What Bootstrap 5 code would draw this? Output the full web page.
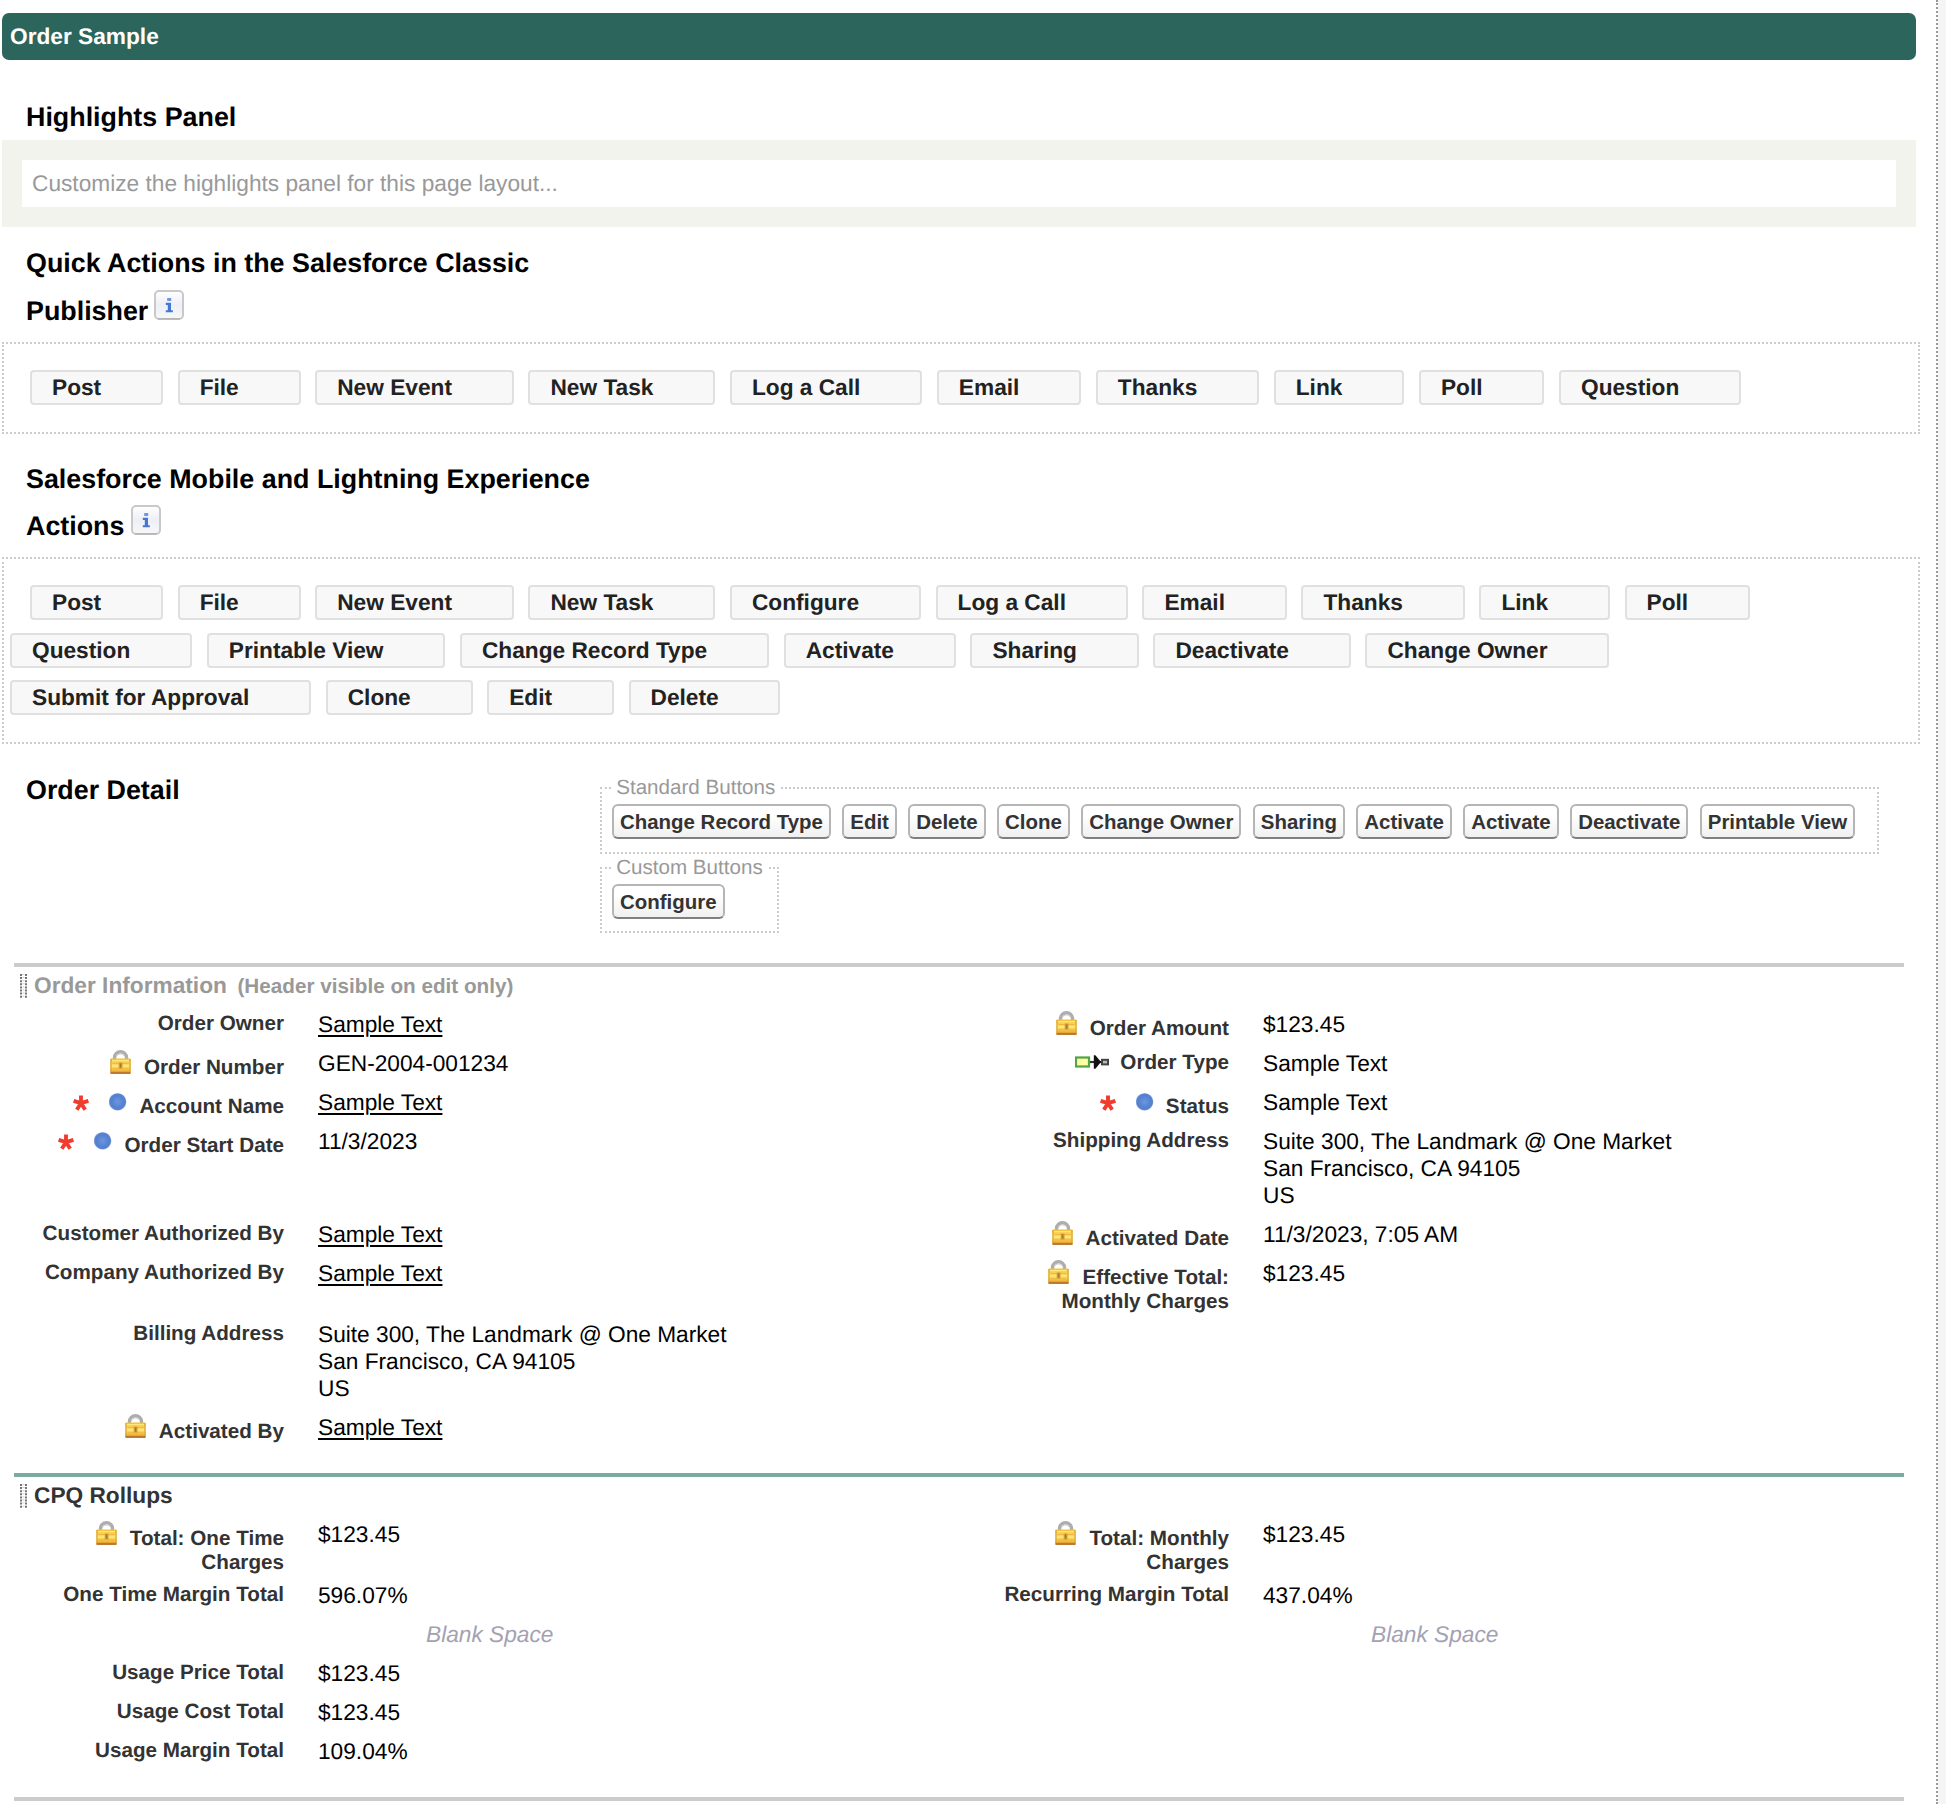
<!DOCTYPE html>
<html lang="en">
<head>
<meta charset="utf-8">
<title>Order Sample</title>
<link href="https://cdn.jsdelivr.net/npm/bootstrap@5.3.0/dist/css/bootstrap.min.css" rel="stylesheet">
<style>
body{background:#f5f5f5;font-family:"Liberation Sans",Arial,sans-serif;font-size:22.7px;line-height:27px;color:#000;text-rendering:geometricPrecision}
.layout-page{width:1938px;height:1804px;background:#fff;border-right:2px dotted #999;padding:13px 16px 0 2px}
.title-bar{width:1914px;height:47px;border-radius:7px;background:#2c655b;padding-left:8px}
.area-title{font-size:26.85px;line-height:47.5px;font-weight:700;padding-left:24px;margin:0}
.hl-panel{width:1914px;height:87px;background:#f2f3ec;padding:20px}
.hl-inner{height:47px;color:#999;padding:0 0 1px 10px}
.drop-area{width:1918px;border:2px dotted #ccc;padding:26px 6px 0;row-gap:12.5px}
.chip-row{gap:14.7px}
.chip-row.first{padding-left:20px}
.chip{height:35px;line-height:31px;border:2px solid #e0e0e0;border-radius:4px;background:#f8f8f8;color:#222;font-weight:700;padding:0 59.8px 0 20px;white-space:nowrap}
.btn-group-box{border:2px dotted #ccc;padding:4px 9.5px 0 10px;height:78px;margin:0}
.btn-group-box legend{float:none;width:auto;font-size:20.6px;line-height:24px;color:#999;padding:0 4.5px 0 5.2px;margin:0 0 0 -1px}
.btn-sf{--bs-btn-padding-x:6px;--bs-btn-padding-y:0;--bs-btn-font-size:20.45px;--bs-btn-line-height:31px;--bs-btn-font-weight:700;--bs-btn-color:#333;--bs-btn-border-width:2px;--bs-btn-border-radius:6px;height:35px;border-color:#b5b5b5 #b5b5b5 #7f7f7f;background:linear-gradient(#fff 30%,#f0f0f0)}
.sect{width:1890px;margin-left:12px;border-top:4px solid #ccc}
.sect.green{border-color:#7aada0}
.sect-head{height:38px;padding:3px 0 0 6px;line-height:30px;font-weight:700;color:#333}
.sect-head.muted{color:#999}
.sect-head small{font-size:20.7px;font-weight:700}
.sect-head svg{margin:4px 7px 0 0}
.frow{height:39px;padding-top:6px}
.frow.tall{height:61px}
.frow.addr{height:93px}
.fcol{width:945px}
.flabel{width:270px;font-size:20.67px;line-height:24px;font-weight:700;color:#333;text-align:right;white-space:nowrap;padding-top:.9px}
.flabel.raised{padding-top:0}
.fvalue{padding-left:34px}
.fvalue u{text-decoration-thickness:2px;text-underline-offset:2.5px;text-decoration-skip-ink:auto}
.blank-space{padding-left:142px;font-style:italic;color:#a3a1b2}
.flabel svg{vertical-align:baseline}
</style>
<script src="https://cdn.jsdelivr.net/npm/bootstrap@5.3.0/dist/js/bootstrap.bundle.min.js"></script>
</head>
<body>
<svg width="0" height="0" class="position-absolute">
<defs>
<linearGradient id="gold" x1="0" y1="0" x2="0" y2="1"><stop offset="0" stop-color="#f3c03a"/><stop offset=".5" stop-color="#fbdf66"/><stop offset=".8" stop-color="#f0b73a"/><stop offset="1" stop-color="#c07828"/></linearGradient>
<radialGradient id="ball"><stop offset="0" stop-color="#6b96e0"/><stop offset=".7" stop-color="#5480d0"/><stop offset=".88" stop-color="#5a84d0"/><stop offset="1" stop-color="#b4c8ee"/></radialGradient>
<linearGradient id="pale" x1="0" y1="0" x2="0" y2="1"><stop offset="0" stop-color="#fff"/><stop offset=".5" stop-color="#edeff6"/><stop offset="1" stop-color="#f8f8f8"/></linearGradient>
<symbol id="lock" viewBox="0 0 34 24"><path d="M4.5 11V7.5a6 5.8 0 0 1 12 0V11" fill="none" stroke="#adadad" stroke-width="3.4"/><path d="M6.2 7.5a4.3 4 0 0 1 8 -1.6" fill="none" stroke="#d0d0d0" stroke-width="1"/><rect x=".3" y="8.5" width="20.4" height="15.3" rx="1" fill="url(#gold)"/><path d="M1 9v13M20 9v13" stroke="#d9a035" stroke-width="1.1"/><path d="M2.5 13.5h16M2.5 18.8h16" stroke="#efb93f" stroke-width="1"/><path d="M2 10.6h17M2 16h17" stroke="#ffe67a" stroke-width="1.4"/><path d="M.5 23h20" stroke="#b5712b" stroke-width="1.5"/><rect x="8.7" y="12.5" width="3.8" height="6" fill="#d29a3c"/><path d="M10.6 13.5v4" stroke="#a8742a" stroke-width="1.2"/></symbol>
<symbol id="req" viewBox="0 0 36 24"><g stroke="#f03c2e" stroke-width="3.9"><path d="M8 14.2V6.4M8 14.2L.6 11.8M8 14.2l7.4-2.4M8 14.2l-4.2 6.6M8 14.2l4.2 6.6"/></g></symbol>
<symbol id="dot" viewBox="0 0 30 24"><circle cx="8.6" cy="12.8" r="8.9" fill="url(#ball)"/></symbol>
<symbol id="ctrl" viewBox="0 0 45 18"><rect x="1" y="4.5" width="13" height="9" fill="#ffffa8" stroke="#4fa53f" stroke-width="2.2"/><path d="M15 9h12" stroke="#333" stroke-width="2.2"/><path d="M18.8 2.2h1.6l5.6 6.8-5.6 6.8h-1.6z" fill="#111"/><rect x="27" y="6.8" width="6" height="4.6" fill="#bbb" stroke="#444" stroke-width="2"/></symbol>
<symbol id="info" viewBox="0 0 30 30"><rect x="1" y="1" width="28" height="28" rx="4" fill="url(#pale)" stroke="#c9c9c9" stroke-width="2"/><path d="M4 28.8h22" stroke="#b5b5b5" stroke-width="1.6"/><path d="M13.2 8h4v3h-4z" fill="#6d97df"/><path d="M11.8 12.8h5.2v7.4h1.8v2.1h-7v-2.1h2v-5.3h-2z" fill="#4377d0"/></symbol>
<symbol id="grip" viewBox="0 0 7 24"><path d="M1 0v24M6 0v24" stroke="#666" stroke-width="1.8" stroke-dasharray="2 1.1"/><path d="M3.5 0v24" stroke="#ccc" stroke-width="2" stroke-dasharray="1 2.1"/></symbol>
</defs>
</svg>
<main class="layout-page overflow-hidden">
  <div class="title-bar d-flex align-items-center text-white fw-bold">Order Sample</div>

  <h2 class="area-title" style="margin-top:33.5px;margin-bottom:-1px">Highlights Panel</h2>
  <div class="hl-panel"><div class="hl-inner bg-white d-flex align-items-center">Customize the highlights panel for this page layout...</div></div>

  <h2 class="area-title" style="margin-top:13px">Quick Actions in the Salesforce Classic<br>Publisher <svg width="30" height="30" style="margin-left:-2px;vertical-align:baseline"><use href="#info"/></svg></h2>
  <div class="drop-area d-flex flex-column" style="height:92px;margin-top:7px">
    <div class="chip-row first d-flex"><span class="chip">Post</span><span class="chip">File</span><span class="chip">New Event</span><span class="chip">New Task</span><span class="chip">Log a Call</span><span class="chip">Email</span><span class="chip">Thanks</span><span class="chip">Link</span><span class="chip">Poll</span><span class="chip">Question</span></div>
  </div>

  <h2 class="area-title" style="margin-top:21.5px">Salesforce Mobile and Lightning Experience<br>Actions <svg width="30" height="30" style="margin-left:-1px;vertical-align:baseline"><use href="#info"/></svg></h2>
  <div class="drop-area d-flex flex-column" style="height:187px;margin-top:6.5px">
    <div class="chip-row first d-flex"><span class="chip">Post</span><span class="chip">File</span><span class="chip">New Event</span><span class="chip">New Task</span><span class="chip">Configure</span><span class="chip">Log a Call</span><span class="chip">Email</span><span class="chip">Thanks</span><span class="chip">Link</span><span class="chip">Poll</span></div>
    <div class="chip-row d-flex"><span class="chip">Question</span><span class="chip">Printable View</span><span class="chip">Change Record Type</span><span class="chip">Activate</span><span class="chip">Sharing</span><span class="chip">Deactivate</span><span class="chip">Change Owner</span></div>
    <div class="chip-row d-flex"><span class="chip">Submit for Approval</span><span class="chip">Clone</span><span class="chip">Edit</span><span class="chip">Delete</span></div>
  </div>

  <div class="d-flex" style="height:219px;padding-top:23px">
    <h2 class="area-title" style="width:598px">Order Detail</h2>
    <div class="d-flex flex-column align-items-start" style="padding-top:9px;row-gap:2px">
      <fieldset class="btn-group-box" style="width:1279px"><legend>Standard Buttons</legend>
        <div class="d-flex text-nowrap" style="gap:11.4px"><button class="btn btn-sf">Change Record Type</button><button class="btn btn-sf">Edit</button><button class="btn btn-sf">Delete</button><button class="btn btn-sf">Clone</button><button class="btn btn-sf">Change Owner</button><button class="btn btn-sf">Sharing</button><button class="btn btn-sf">Activate</button><button class="btn btn-sf">Activate</button><button class="btn btn-sf">Deactivate</button><button class="btn btn-sf">Printable View</button></div>
      </fieldset>
      <fieldset class="btn-group-box" style="width:179px;height:77px"><legend>Custom Buttons</legend>
        <button class="btn btn-sf d-block">Configure</button>
      </fieldset>
    </div>
  </div>

  <section class="sect" style="height:510px">
    <div class="sect-head muted d-flex"><svg width="7" height="24"><use href="#grip"/></svg><span>Order Information&nbsp; <small style="margin-left:-2px">(Header visible on edit only)</small></span></div>
    <div class="frow d-flex">
      <div class="fcol d-flex"><div class="flabel">Order Owner</div><div class="fvalue"><u>Sample Text</u></div></div>
      <div class="fcol d-flex"><div class="flabel raised"><svg width="34" height="24"><use href="#lock"/></svg>Order Amount</div><div class="fvalue">$123.45</div></div>
    </div>
    <div class="frow d-flex">
      <div class="fcol d-flex"><div class="flabel raised"><svg width="34" height="24"><use href="#lock"/></svg>Order Number</div><div class="fvalue">GEN-2004-001234</div></div>
      <div class="fcol d-flex"><div class="flabel"><svg width="45" height="18" style="vertical-align:-2px"><use href="#ctrl"/></svg>Order Type</div><div class="fvalue">Sample Text</div></div>
    </div>
    <div class="frow d-flex">
      <div class="fcol d-flex"><div class="flabel raised"><svg width="36" height="24"><use href="#req"/></svg><svg width="30" height="24"><use href="#dot"/></svg>Account Name</div><div class="fvalue"><u>Sample Text</u></div></div>
      <div class="fcol d-flex"><div class="flabel raised"><svg width="36" height="24"><use href="#req"/></svg><svg width="30" height="24"><use href="#dot"/></svg>Status</div><div class="fvalue">Sample Text</div></div>
    </div>
    <div class="frow addr d-flex">
      <div class="fcol d-flex"><div class="flabel raised"><svg width="36" height="24"><use href="#req"/></svg><svg width="30" height="24"><use href="#dot"/></svg>Order Start Date</div><div class="fvalue">11/3/2023</div></div>
      <div class="fcol d-flex"><div class="flabel">Shipping Address</div><div class="fvalue">Suite 300, The Landmark @ One Market<br>San Francisco, CA 94105<br>US</div></div>
    </div>
    <div class="frow d-flex">
      <div class="fcol d-flex"><div class="flabel">Customer Authorized By</div><div class="fvalue"><u>Sample Text</u></div></div>
      <div class="fcol d-flex"><div class="flabel raised"><svg width="34" height="24"><use href="#lock"/></svg>Activated Date</div><div class="fvalue">11/3/2023, 7:05 AM</div></div>
    </div>
    <div class="frow tall d-flex">
      <div class="fcol d-flex"><div class="flabel">Company Authorized By</div><div class="fvalue"><u>Sample Text</u></div></div>
      <div class="fcol d-flex"><div class="flabel raised"><svg width="34" height="24"><use href="#lock"/></svg>Effective Total:<br>Monthly Charges</div><div class="fvalue">$123.45</div></div>
    </div>
    <div class="frow addr d-flex">
      <div class="fcol d-flex"><div class="flabel">Billing Address</div><div class="fvalue">Suite 300, The Landmark @ One Market<br>San Francisco, CA 94105<br>US</div></div>
    </div>
    <div class="frow d-flex">
      <div class="fcol d-flex"><div class="flabel raised"><svg width="34" height="24"><use href="#lock"/></svg>Activated By</div><div class="fvalue"><u>Sample Text</u></div></div>
    </div>
  </section>

  <section class="sect green" style="height:324px">
    <div class="sect-head d-flex"><svg width="7" height="24"><use href="#grip"/></svg><span>CPQ Rollups</span></div>
    <div class="frow tall d-flex">
      <div class="fcol d-flex"><div class="flabel raised"><svg width="34" height="24"><use href="#lock"/></svg>Total: One Time<br>Charges</div><div class="fvalue">$123.45</div></div>
      <div class="fcol d-flex"><div class="flabel raised"><svg width="34" height="24"><use href="#lock"/></svg>Total: Monthly<br>Charges</div><div class="fvalue">$123.45</div></div>
    </div>
    <div class="frow d-flex">
      <div class="fcol d-flex"><div class="flabel">One Time Margin Total</div><div class="fvalue">596.07%</div></div>
      <div class="fcol d-flex"><div class="flabel">Recurring Margin Total</div><div class="fvalue">437.04%</div></div>
    </div>
    <div class="frow d-flex">
      <div class="fcol d-flex"><div class="flabel"></div><div class="blank-space">Blank Space</div></div>
      <div class="fcol d-flex"><div class="flabel"></div><div class="blank-space">Blank Space</div></div>
    </div>
    <div class="frow d-flex"><div class="fcol d-flex"><div class="flabel">Usage Price Total</div><div class="fvalue">$123.45</div></div></div>
    <div class="frow d-flex"><div class="fcol d-flex"><div class="flabel">Usage Cost Total</div><div class="fvalue">$123.45</div></div></div>
    <div class="frow d-flex"><div class="fcol d-flex"><div class="flabel">Usage Margin Total</div><div class="fvalue">109.04%</div></div></div>
  </section>
  <section class="sect"></section>
</main>
</body>
</html>
